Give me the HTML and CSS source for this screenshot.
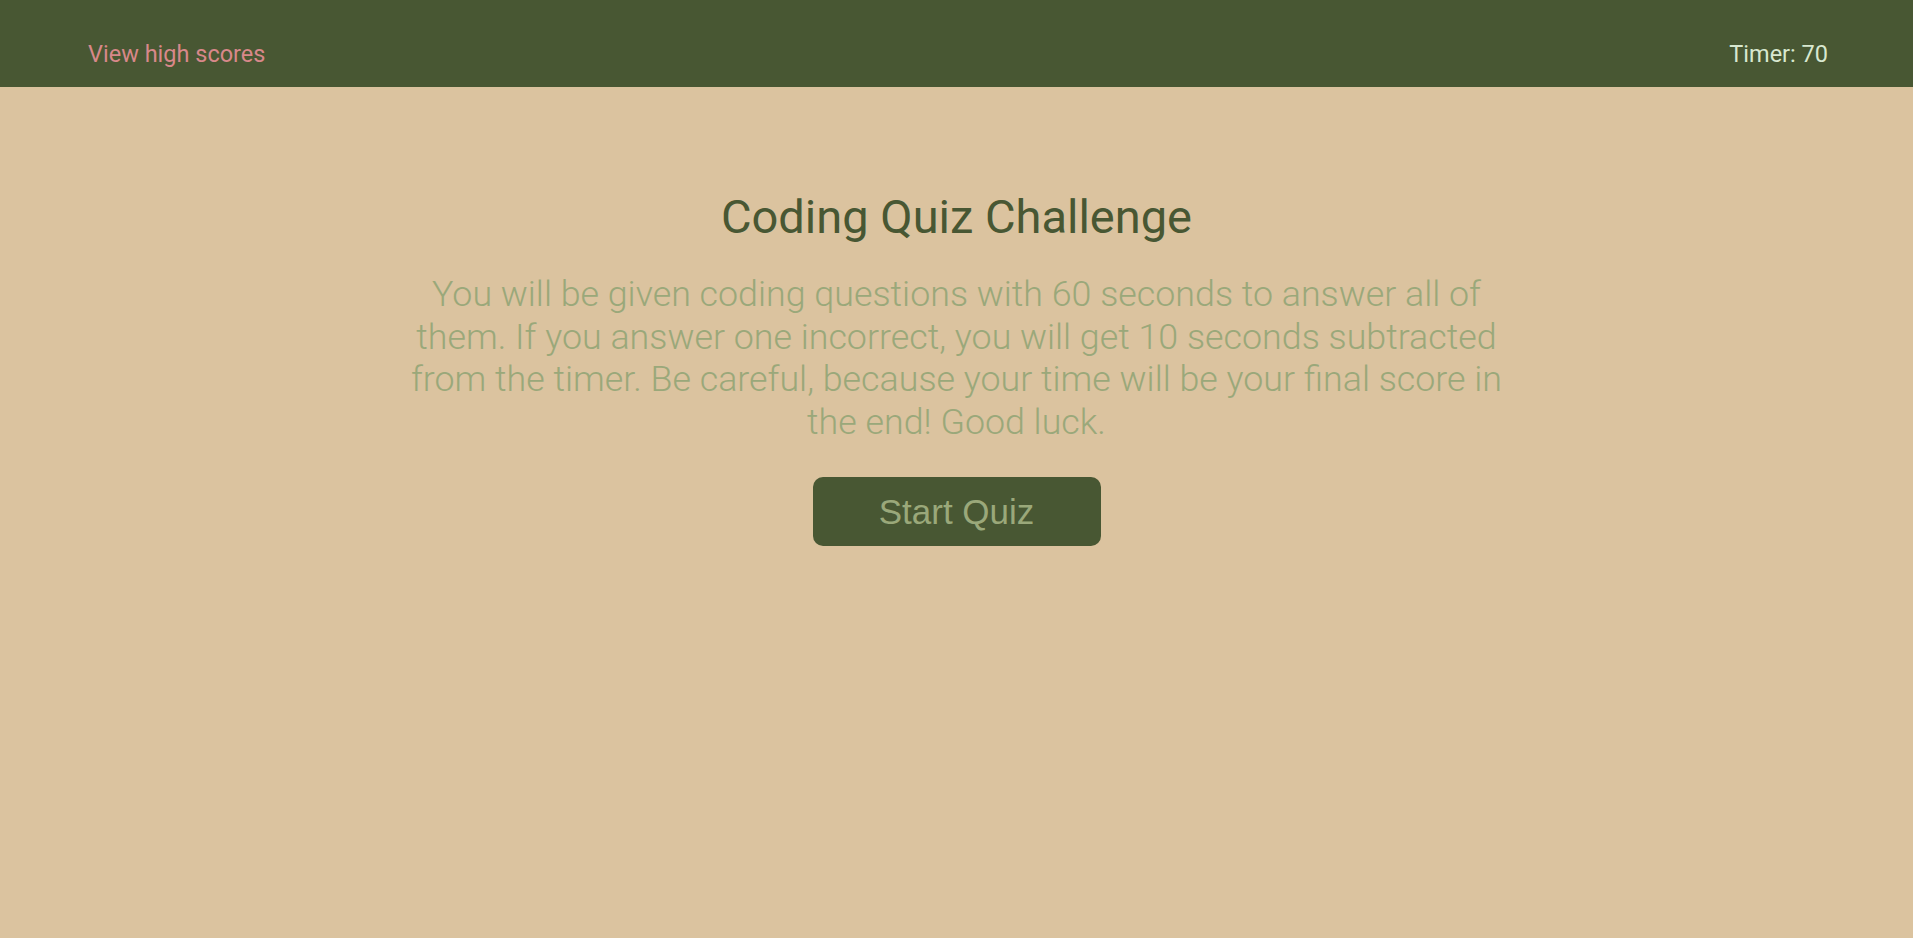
FILE: index.html
```html
<!DOCTYPE html>
<html lang="en">
<head>
<meta charset="utf-8">
<title>Coding Quiz Challenge</title>
<link rel="stylesheet" href="styles.css">
</head>
<body>
<header class="top-bar">
  <a class="high-scores" href="#">View high scores</a>
  <div class="timer">Timer: 70</div>
</header>
<main class="intro">
  <h1 class="intro-title">Coding Quiz Challenge</h1>
  <p class="intro-text">You will be given coding questions with 60 seconds to answer all of them. If you answer one incorrect, you will get 10 seconds subtracted from the timer. Be careful, because your time will be your final score in the end! Good luck.</p>
  <button class="start-btn" type="button">Start Quiz</button>
</main>
</body>
</html>
```
FILE: styles.css
```css
html, body {
  margin: 0;
  padding: 0;
}
body {
  background: #dbc39f;
  font-family: Roboto, "Liberation Sans", sans-serif;
  min-height: 938px;
}
.top-bar {
  height: 87px;
  background: #485733;
  display: flex;
  align-items: center;
  justify-content: space-between;
  padding: 20px 85px 0 88px;
  box-sizing: border-box;
}
.high-scores {
  color: #d8888a;
  text-decoration: none;
  font-size: 23.5px;
}
.timer {
  color: #d8e8d0;
  font-size: 23.5px;
}
.intro {
  display: flex;
  flex-direction: column;
  align-items: center;
  padding-top: 102px;
}
.intro-title {
  margin: 0;
  font-weight: 400;
  font-size: 47px;
  color: #485733;
  line-height: 1.2;
}
.intro-text {
  width: 1120px;
  margin: 28px 0 0;
  text-align: center;
  font-weight: 300;
  font-size: 35.8px;
  line-height: 42.5px;
  color: #9aa87a;
}
.start-btn {
  margin-top: 34px;
  width: 288px;
  height: 69px;
  border: none;
  border-radius: 10px;
  background: #485733;
  color: #9aa87a;
  font-family: "Liberation Sans", Arial, sans-serif;
  font-size: 35px;
  cursor: pointer;
}
```
